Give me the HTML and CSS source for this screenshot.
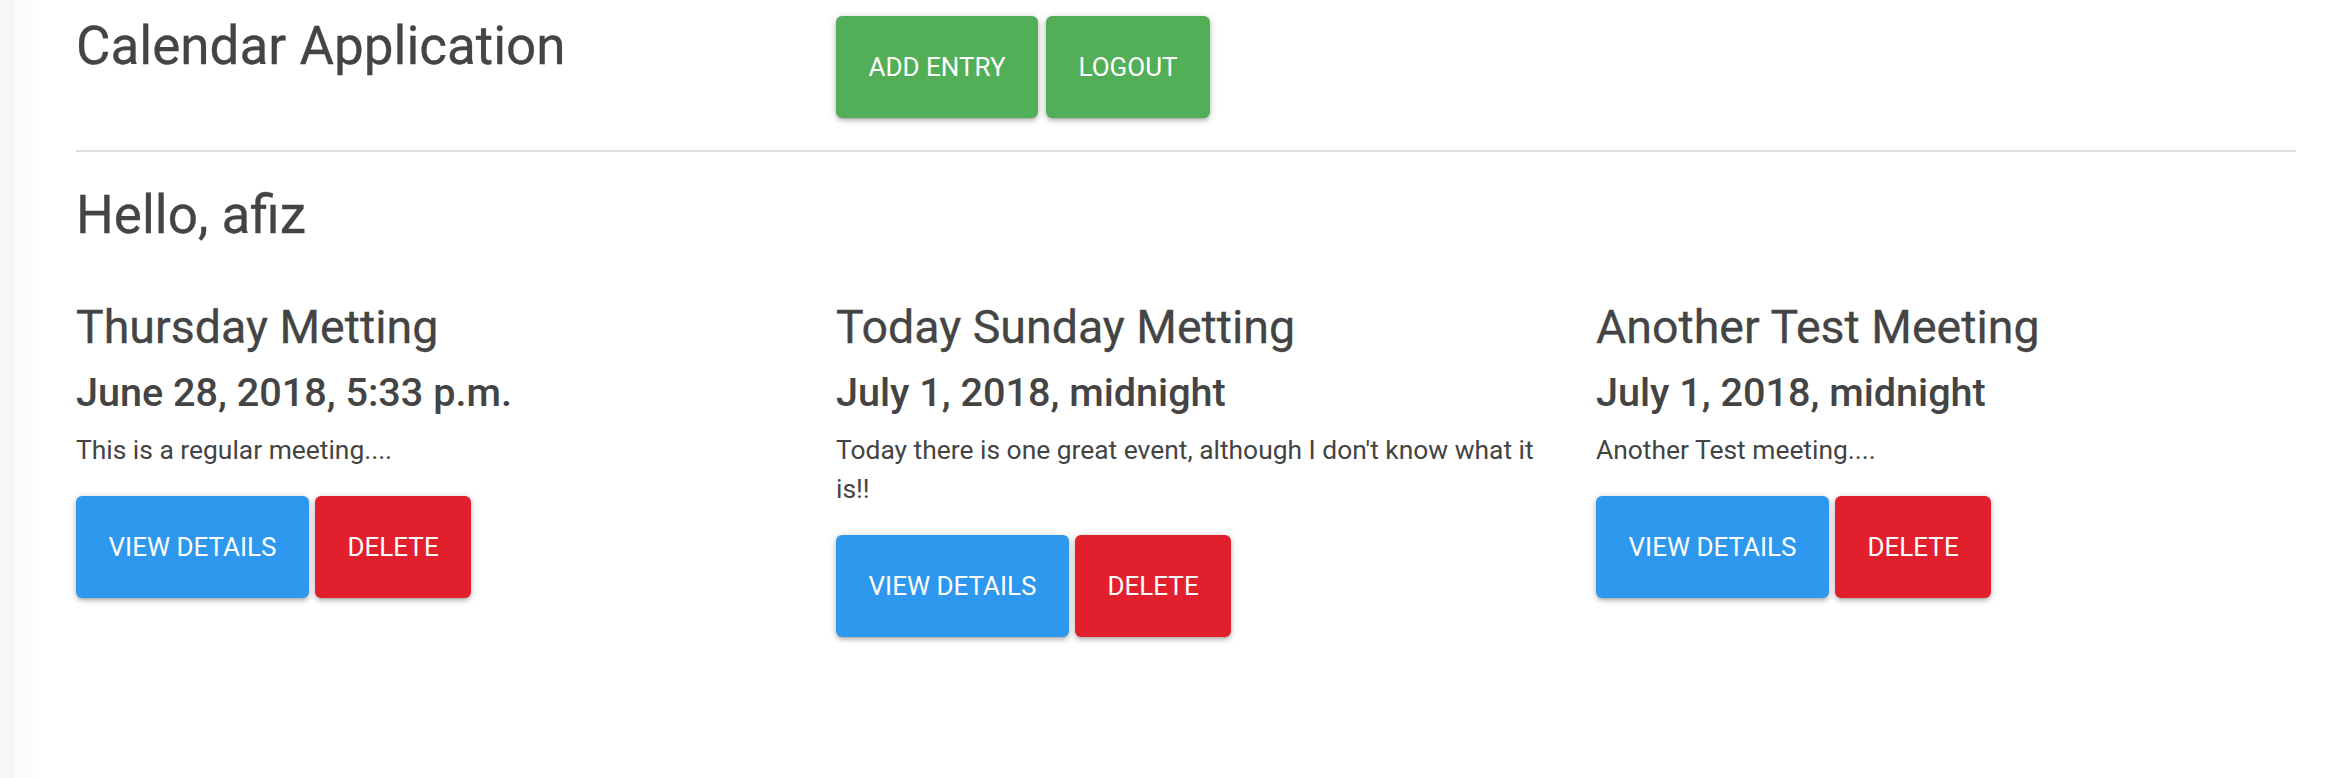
FILE: index.html
```html
<!DOCTYPE html>
<html lang="en">
<head>
<meta charset="utf-8">
<title>Calendar Application</title>
<link rel="stylesheet" href="styles.css">
</head>
<body>
<div class="page">
  <header class="topbar">
    <h1 class="app-title">Calendar Application</h1>
    <div class="actions">
      <a class="btn btn-green" href="#">ADD ENTRY</a>
      <a class="btn btn-green" href="#">LOGOUT</a>
    </div>
  </header>
  <hr class="divider">
  <h2 class="greeting">Hello, afiz</h2>
  <section class="entries">
    <article class="entry">
      <h3 class="entry-title">Thursday Metting</h3>
      <h4 class="entry-date">June 28, 2018, 5:33 p.m.</h4>
      <p class="entry-desc">This is a regular meeting....</p>
      <div class="entry-actions">
        <a class="btn btn-blue" href="#">VIEW DETAILS</a>
        <a class="btn btn-red" href="#">DELETE</a>
      </div>
    </article>
    <article class="entry">
      <h3 class="entry-title">Today Sunday Metting</h3>
      <h4 class="entry-date">July 1, 2018, midnight</h4>
      <p class="entry-desc">Today there is one great event, although I don't know what it is!!</p>
      <div class="entry-actions">
        <a class="btn btn-blue" href="#">VIEW DETAILS</a>
        <a class="btn btn-red" href="#">DELETE</a>
      </div>
    </article>
    <article class="entry">
      <h3 class="entry-title">Another Test Meeting</h3>
      <h4 class="entry-date">July 1, 2018, midnight</h4>
      <p class="entry-desc">Another Test meeting....</p>
      <div class="entry-actions">
        <a class="btn btn-blue" href="#">VIEW DETAILS</a>
        <a class="btn btn-red" href="#">DELETE</a>
      </div>
    </article>
  </section>
</div>
</body>
</html>
```

FILE: styles.css
```css
html, body {
  margin: 0;
  padding: 0;
}

body {
  font-family: Roboto, "Liberation Sans", sans-serif;
  color: #444444;
  background: linear-gradient(to right, #f6f6f6 0, #f6f6f6 15px, #fcfcfc 15px, #fcfcfc 33px, #ffffff 33px);
  min-height: 778px;
}

.page {
  padding: 0 32px 0 76px;
}

.topbar {
  display: grid;
  grid-template-columns: 720px 1fr;
  column-gap: 40px;
  align-items: start;
  padding-top: 16px;
}

.app-title {
  margin: 2px 0 0;
  font-size: 53px;
  line-height: 1.08;
  font-weight: 400;
  -webkit-text-stroke: 0.3px #444444;
}

.actions {
  display: flex;
  gap: 8px;
}

.divider {
  margin: 32px 0 0;
  border: 0;
  height: 2px;
  background: #e0e0e0;
}

.greeting {
  margin: 34.6px 0 0;
  font-size: 53px;
  line-height: 1.08;
  font-weight: 400;
  -webkit-text-stroke: 0.3px #444444;
}

.entries {
  display: grid;
  grid-template-columns: 720px 720px 1fr;
  column-gap: 40px;
  align-items: start;
  margin-top: 58px;
}

.entry-title {
  margin: 0;
  font-size: 46.5px;
  line-height: 50.6px;
  font-weight: 400;
  -webkit-text-stroke: 0.3px #444444;
}

.entry-date {
  margin: 18.5px 0 0;
  font-size: 39.6px;
  line-height: 44px;
  font-weight: 500;
}

.entry-desc {
  margin: 16.3px 0 0;
  font-size: 26.4px;
  line-height: 39px;
  font-weight: 400;
}

.entry-actions {
  display: flex;
  gap: 6px;
  margin-top: 26px;
}

.btn {
  display: inline-flex;
  align-items: center;
  justify-content: center;
  height: 102px;
  padding: 0 32.5px;
  border-radius: 6px;
  font-size: 26px;
  font-weight: 400;
  color: #ffffff;
  text-decoration: none;
  white-space: nowrap;
  box-shadow: 0 3px 4px 0 rgba(0, 0, 0, 0.16), 0 4px 2px -3px rgba(0, 0, 0, 0.12), 0 1px 8px 0 rgba(0, 0, 0, 0.16);
}

.btn-green {
  background: #52af57;
}

.btn-blue {
  background: #2e98ef;
}

.btn-red {
  background: #e2202d;
}
```
